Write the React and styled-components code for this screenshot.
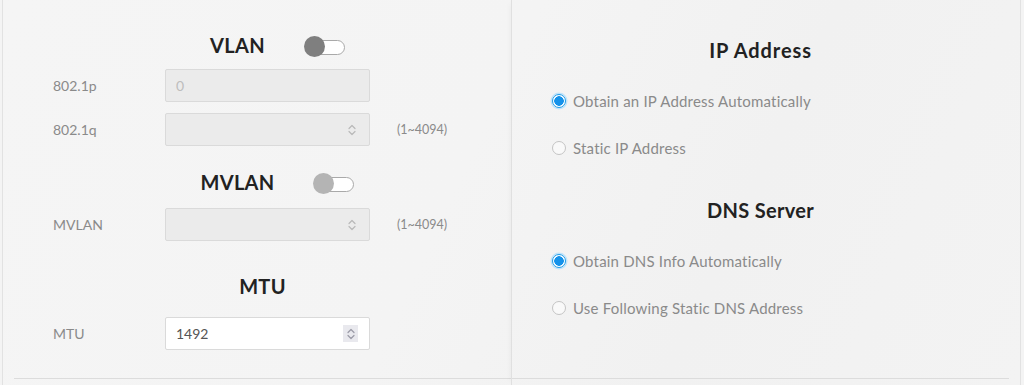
import React from 'react'
import styled, { createGlobalStyle } from 'styled-components'

const GlobalStyle = createGlobalStyle`
  html, body {
    margin: 0;
    padding: 0;
    background: #f4f4f4;
    font-family: "Lato", "DejaVu Sans", sans-serif;
  }
`

const UpDown = ({ color = '#b9b9b9' }) => (
  <svg width="10" height="14" viewBox="0 0 10 14" fill="none" stroke={color} strokeWidth="1.2" strokeLinecap="round" strokeLinejoin="round">
    <path d="M2 5.5 L5 2.5 L8 5.5" />
    <path d="M2 8.5 L5 11.5 L8 8.5" />
  </svg>
)

const App = () => {
  return (
    <>
      <GlobalStyle />
      <Card>
        <LeftCol>
          <Body $side="left">
            <Head $mt={25} $mb={4}>
              <Title>VLAN</Title>
              <Toggle><Knob /></Toggle>
            </Head>
            <Row>
              <Label>802.1p</Label>
              <Field $disabled><Value $muted>0</Value></Field>
            </Row>
            <Row $mt={11}>
              <Label>802.1q</Label>
              <Field $disabled><Value /><UpDown /></Field>
              <Hint>(1~4094)</Hint>
            </Row>

            <Head $mt={16} $mb={6}>
              <Title>MVLAN</Title>
              <Toggle><Knob $light /></Toggle>
            </Head>
            <Row>
              <Label>MVLAN</Label>
              <Field $disabled><Value /><UpDown /></Field>
              <Hint>(1~4094)</Hint>
            </Row>

            <Head $mt={25} $mb={11} $plain>
              <Title>MTU</Title>
            </Head>
            <Row>
              <Label>MTU</Label>
              <Field><Value>1492</Value><Spin><UpDown color="#9a9aa6" /></Spin></Field>
            </Row>
          </Body>
        </LeftCol>

        <RightCol>
          <Body $side="right">
            <Head $mt={30} $mb={19} $plain>
              <Title $wide>IP Address</Title>
            </Head>
            <RadioList>
              <RadioRow><Radio $on /><RadioText>Obtain an IP Address Automatically</RadioText></RadioRow>
              <RadioRow><Radio /><RadioText>Static IP Address</RadioText></RadioRow>
            </RadioList>

            <Head $mt={30} $mb={19} $plain>
              <Title>DNS Server</Title>
            </Head>
            <RadioList>
              <RadioRow><Radio $on /><RadioText>Obtain DNS Info Automatically</RadioText></RadioRow>
              <RadioRow><Radio /><RadioText>Use Following Static DNS Address</RadioText></RadioRow>
            </RadioList>
          </Body>
        </RightCol>
      </Card>
    </>
  )
}

export default App

const Card = styled.div`
  display: grid;
  grid-template-columns: 508px 1fr;
  height: 385px;
  margin-left: 2px;
  width: 1019px;
  border-left: 1px solid #e2e2e2;
  border-right: 1px solid #e2e2e2;
  box-sizing: border-box;
  background: linear-gradient(115deg, #f5f5f5 0%, #f4f4f4 45%, #f1f1f1 70%, #f3f3f3 100%);
`

const LeftCol = styled.div`
  display: flex;
  flex-direction: column;
`

const RightCol = styled.div`
  display: flex;
  flex-direction: column;
  border-left: 1px solid #e0e0e0;
  box-shadow: -4px 0 6px -4px rgba(0, 0, 0, 0.05);
`

const Body = styled.div`
  height: 378px;
  display: flex;
  flex-direction: column;
  border-bottom: 1px solid #dcdcdc;
  margin-left: ${p => (p.$side === 'left' ? '11px' : '0')};
  margin-right: ${p => (p.$side === 'right' ? '11px' : '0')};
`

const Head = styled.div`
  display: flex;
  justify-content: center;
  align-items: center;
  height: 40px;
  margin-top: ${p => p.$mt}px;
  margin-bottom: ${p => p.$mb}px;
  padding-left: ${p => (p.$plain ? '0' : '30px')};
`

const Title = styled.h2`
  margin: 0;
  font-size: 20px;
  font-weight: 700;
  color: #222;
  letter-spacing: ${p => (p.$wide ? '0.9px' : '0.3px')};
`

const Toggle = styled.div`
  position: relative;
  margin-left: 46px;
  width: 32px;
  height: 13px;
  border: 1px solid #a9a9a9;
  border-radius: 8px;
  background: #fff;
  margin-top: 4px;
`

const Knob = styled.span`
  position: absolute;
  left: -8px;
  top: -5px;
  width: 21px;
  height: 21px;
  border-radius: 50%;
  background: ${p => (p.$light ? '#b4b4b4' : '#7f7f7f')};
`

const Row = styled.div`
  display: grid;
  grid-template-columns: 85px 205px auto;
  column-gap: 27px;
  align-items: center;
  padding-left: 39px;
  margin-top: ${p => p.$mt || 0}px;
`

const Label = styled.span`
  font-size: 14px;
  color: #8a8a8a;
`

const Field = styled.div`
  display: flex;
  align-items: center;
  justify-content: space-between;
  height: 33px;
  box-sizing: border-box;
  padding: 0 12px 0 10px;
  border: 1px solid #dadada;
  border-radius: 2px;
  background: ${p => (p.$disabled ? '#ebebeb' : '#fff')};
`

const Value = styled.span`
  font-size: 14px;
  color: ${p => (p.$muted ? '#bdbdbd' : '#555')};
`

const Spin = styled.span`
  display: flex;
  align-items: center;
  justify-content: center;
  width: 15px;
  height: 17px;
  margin-right: -1px;
  background: #e9e9ee;
`

const Hint = styled.span`
  font-size: 12.5px;
  color: #8a8a8a;
`

const RadioList = styled.div`
  display: flex;
  flex-direction: column;
  gap: 23px;
  padding-left: 40px;
`

const RadioRow = styled.label`
  display: flex;
  align-items: center;
  height: 24px;
  gap: 7px;
`

const Radio = styled.span`
  width: 14px;
  height: 14px;
  box-sizing: border-box;
  border-radius: 50%;
  border: 1px solid ${p => (p.$on ? '#1a9be8' : '#c4c4c4')};
  background: ${p => (p.$on ? 'radial-gradient(circle, #1592ea 0 4.5px, #fff 5px)' : '#f9f9f9')};
  box-shadow: ${p => (p.$on ? '0 0 0 1.5px #bfe3fb' : 'none')};
`

const RadioText = styled.span`
  font-size: 15px;
  letter-spacing: 0.2px;
  color: #8a8a8a;
`
